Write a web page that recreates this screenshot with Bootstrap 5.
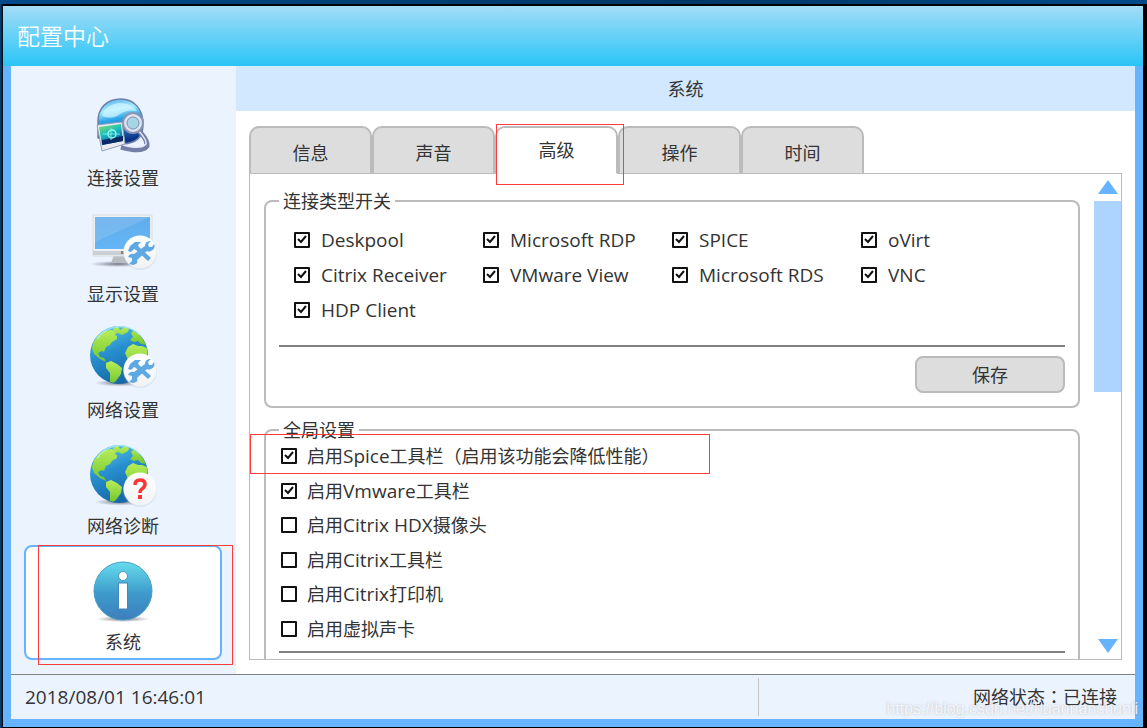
<!DOCTYPE html>
<html lang="zh-CN">
<head>
<meta charset="utf-8">
<meta name="viewport" content="width=device-width, initial-scale=1">
<title>配置中心</title>
<link href="https://cdn.jsdelivr.net/npm/bootstrap@5.3.0/dist/css/bootstrap.min.css" rel="stylesheet">
<style>
:root { --edge:#66b3ff; --pale:#ebf3ff; --line:#bbb; --mark:#ff3b3b; }
body { font-family:"Open Sans","Noto Sans CJK SC",sans-serif; font-size:18px; line-height:24px; color:#333; background:linear-gradient(90deg,#00498a,#003768 60%,#00498a) top/100% 4px no-repeat,linear-gradient(90deg,#063c6c 1px,#000 3px); }
.desktop { height:100vh; padding:6px 4px 1px 3px; }
.titlebar { height:60px; padding-left:14px; color:#fff; background:linear-gradient(#a3dcf7,#29c5f6); }
.titlebar h1 { font-size:23px; font-weight:350; line-height:32px; }
.frame { border:solid var(--edge); border-width:0 8px 8px; min-height:0; }
.side { width:225px; background:var(--pale); padding:15px 14px 0 13px; gap:1px; }
.side-item { height:115px; padding-top:10px; border:2px solid transparent; border-radius:8px; background:none; color:inherit; }
.side-item svg { width:70px; height:70px; display:block; margin-bottom:3px; }
.side-item.current { background:#fff; border-color:var(--edge); }
.page-title { height:45px; font-size:18px; line-height:46px; background:#d1e8ff; }
.work { padding:15px 13px 14px; }
.tab-btn { width:123px; height:48px; padding-top:5px; border:2px solid var(--line); border-width:2px 2px 1px; border-radius:10px 10px 0 0; background:#ddd; color:inherit; }
.tab-btn.current { background:#fff; border-bottom-color:#fff; padding-top:0; }
.tab-row { margin-bottom:-1px; z-index:1; }
.panel { border:1px solid var(--line); }
.pane { padding:15px 14px 0 14px; }
fieldset { border:2px solid var(--line); border-radius:8px; padding:0 13px; margin-bottom:10px; }
legend { float:none; width:auto; margin:0; padding:0 4px; font-size:18px; line-height:24px; }
.types { display:grid; grid-template-columns:repeat(4,189px); grid-auto-rows:35px; padding:9px 0 0 15px; font-size:19px; height:132px; }
.types label { gap:11px; }
.opts { display:grid; grid-template-rows:repeat(6,1fr); height:212px; padding:0 0 5px 2px; margin-top:-3px; }
.opts label { gap:10px; }
.opts b { font-size:19px; font-weight:400; }
.tail { padding-bottom:60px; }
.tick { appearance:none; flex:none; width:16px; height:16px; margin:0; border:2px solid #111; border-radius:1px; background:#fff; }
.tick:checked { background:#fff url("data:image/svg+xml,%3Csvg xmlns='http://www.w3.org/2000/svg' viewBox='0 0 12 12'%3E%3Cpath d='M2 5l3 3 5-6' fill='none' stroke='%23111' stroke-width='2'/%3E%3C/svg%3E") center/12px; }
.rule { height:2px; margin:0; border:0; background:#808080; opacity:1; }
.save { width:150px; height:37px; margin:9px 0 13px; border:2px solid var(--line); border-radius:8px; background:#ddd; color:inherit; }
.scroller { width:27px; padding:6px 0; }
.scroller button { border:0; padding:0; background:none; height:14px; line-height:0; }
.thumb { height:191px; margin-top:7px; background:#acd4ff; }
.status { height:45px; border-top:1px solid #808080; background:var(--pale); padding:3px 19px 3px 14px; }
.state { width:359px; border-left:1px solid #c4c4c4; font-family:"Open Sans","Noto Sans CJK TC",sans-serif; margin-right:-1px; }
.clock { font-size:19px; }
.callout-box { position:absolute; border:1px solid var(--mark); pointer-events:none; z-index:3; }
.around-side { inset:-2px -13px -7px 12px; }
.around-tab { inset:-4px -8px -12px -1px; }
.around-opt { left:-31px; top:-5px; width:460px; height:40px; }
.stamp { position:absolute; right:9px; bottom:7px; font:16px/24px "Liberation Sans",sans-serif; color:#ffffffd0; text-shadow:0 0 2px #8888; pointer-events:none; }
</style>
</head>
<body>
<svg width="0" height="0" class="position-absolute" aria-hidden="true">
  <defs>
    <linearGradient id="sea" x2="0.4" y2="1"><stop stop-color="#62cdf1"/><stop offset=".5" stop-color="#278fce"/><stop offset="1" stop-color="#1769a8"/></linearGradient>
    <linearGradient id="land" x2="0" y2="1"><stop stop-color="#b8ed5a"/><stop offset="1" stop-color="#73c72d"/></linearGradient>
    <linearGradient id="screen" x2="0" y2="1"><stop stop-color="#62adeb"/><stop offset="1" stop-color="#64b5f5"/></linearGradient>
    <linearGradient id="disc" x2="0" y2="1"><stop stop-color="#fff"/><stop offset="1" stop-color="#f0f2f4"/></linearGradient>
    <linearGradient id="info" x2="0" y2="1"><stop stop-color="#66dcec"/><stop offset=".55" stop-color="#3d9acb"/><stop offset="1" stop-color="#3e7ebd"/></linearGradient>
    <linearGradient id="helmet" x2=".2" y2="1"><stop stop-color="#4aa9e5"/><stop offset=".3" stop-color="#a9edff"/><stop offset=".5" stop-color="#2fa6ea"/><stop offset="1" stop-color="#0a3186"/></linearGradient>
    <linearGradient id="photo" x2=".5" y2="1"><stop stop-color="#8be05c"/><stop offset=".5" stop-color="#18bfc2"/><stop offset="1" stop-color="#07529b"/></linearGradient>
    <radialGradient id="shade"><stop stop-color="#556" stop-opacity=".8"/><stop offset="1" stop-color="#667" stop-opacity="0"/></radialGradient>
    <clipPath id="ball"><circle cx="31" cy="34" r="28.500"/></clipPath>
    <g id="globe">
      <ellipse cx="32" cy="62" rx="25" ry="3.500" fill="url(#shade)"/>
      <circle cx="31" cy="34" r="29" fill="url(#sea)"/>
      <g clip-path="url(#ball)" fill="url(#land)">
        <path d="M4 27l2-7 5-7 6-3 6-1 5 1-1 4 2 1 0 3-5 3-2 3-4 2-2 5-2-1-4 2 2 4 4 1 2 4-6-3-6-5z"/>
        <path d="M25 8l5-3 2 4 5-3 4 2-1 3-6 3-4-2-3 1zM43 12l3-3 4 3 6 6 2 6-5-1-3-3-4 1-4-2 3-3z"/>
        <path d="M18 42l5-2 6 3 5 4-1 6-5 7-3 2-3-1 0-9-4-5z"/>
        <path d="M37 32l3-6 5-3 5 2 4 0 5 2 2 5v12l-8 7-5-2-1-8-7-2z"/>
      </g>
      <path d="M9 18A28 28 0 0 1 52 14" fill="none" stroke="#b8efff" stroke-width="1.500" opacity=".7"/>
    </g>
    <g id="puck"><circle cx="52" cy="50" r="17" fill="#b4c5d9" opacity=".35"/><circle cx="52" cy="49" r="16.500" fill="url(#disc)"/></g>
    <g id="tools" fill="#5ea9e4">
      <path d="M40 48l2-5 5-4 6 0-3 3 1 2 12 11-3 3-12-11-2-1-3 3z"/>
      <path d="M63 38l-3 3 1 3 3 0 2-3q2 5-3 7-2 1-4 0L49 57q1 3-1 4l-3 1-4-1 3-3 0-3-4-1q2-4 6-3L57 43q0-5 6-5z"/>
    </g>
  </defs>
</svg>

<div class="desktop d-flex flex-column position-relative">
  <header class="titlebar d-flex align-items-center flex-shrink-0"><h1 class="m-0">配置中心</h1></header>
  <div class="frame d-flex flex-column flex-grow-1">
    <div class="d-flex flex-grow-1 overflow-hidden">
      <nav class="side d-flex flex-column flex-shrink-0" aria-label="设置">
        <button type="button" class="side-item flex-shrink-0 d-flex flex-column align-items-center">
          <svg viewBox="0 0 70 70" aria-hidden="true">
            <path d="M10 31C9 14 20 6 33 6s22 10 22 25c0 14-7 19-20 20l-25-6z" fill="url(#helmet)" stroke="#6c80a9" stroke-width="1.500"/>
            <path d="M14 23q4-12 17-13 12 0 18 8-10-2-17 3-7 6-18 2z" fill="#d4f7ff" opacity=".7"/>
            <path d="M47 34q13 12 12 19-5 7-26 1" fill="none" stroke="#747ea5" stroke-width="5"/>
            <path d="M47 34q12 12 11 17-5 6-23 1" fill="none" stroke="#e7e9f8" stroke-width="1.500"/>
            <circle cx="45" cy="30" r="10" fill="#dbe3ee" stroke="#8995b4" stroke-width="2"/><circle cx="45" cy="30" r="6" fill="#a6d5e3" stroke="#8090b0"/>
            <path d="M9 32l25-3 3 22-23 7z" fill="#e8ecf1" stroke="#929eb6"/>
            <path d="M11 34l22-3 2 17-21 4z" fill="url(#photo)"/>
            <path d="M14 47l21-4v5l-21 4z" fill="#092b65"/>
            <circle cx="24" cy="41" r="4" fill="none" stroke="#9ff7e8" stroke-width="1.500"/><path d="M15 41h17M23 35v12" stroke="#79eada"/>
          </svg>
          <span>连接设置</span>
        </button>
        <button type="button" class="side-item flex-shrink-0 d-flex flex-column align-items-center">
          <svg viewBox="0 2 70 70" aria-hidden="true">
            <ellipse cx="30" cy="57" rx="28" ry="3" fill="url(#shade)"/>
            <path d="M26 48h13l3 8H23z" fill="#b8bdc1"/>
            <path d="M5 8h59v41H5z" fill="#eef1f3" stroke="#d6dce1"/>
            <path d="M7 10h55v32H7z" fill="url(#screen)"/><path d="M7 10h55L7 35z" fill="#fff" opacity=".12"/>
            <path d="M5 44h59v4H5z" fill="#cbd0d4"/><path d="M33 44h3v3h-3z" fill="#7c8387"/>
            <use href="#puck" y="-4"/><use href="#tools" y="-4"/>
          </svg>
          <span>显示设置</span>
        </button>
        <button type="button" class="side-item flex-shrink-0 d-flex flex-column align-items-center">
          <svg viewBox="0 4 70 70" aria-hidden="true"><use href="#globe"/><use href="#puck"/><use href="#tools"/></svg>
          <span>网络设置</span>
        </button>
        <button type="button" class="side-item flex-shrink-0 d-flex flex-column align-items-center">
          <svg viewBox="0 1 70 70" aria-hidden="true"><use href="#globe"/><use href="#puck"/><path d="M47 45q0-5 5-5t5 4q0 3-3 5-2 1-2 4" fill="none" stroke="#f33" stroke-width="3.500"/><path d="M50 55h4v4h-4z" fill="#f33"/></svg>
          <span>网络诊断</span>
        </button>
        <button type="button" class="side-item current flex-shrink-0 position-relative d-flex flex-column align-items-center" aria-current="page">
          <svg viewBox="0 0 70 70" aria-hidden="true">
            <ellipse cx="35" cy="62" rx="27" ry="3" fill="url(#shade)"/>
            <circle cx="35" cy="34" r="29" fill="url(#info)" stroke="#459dc5"/>
            <circle cx="35" cy="19" r="4.500" fill="#fff" stroke="#4a9cbd"/><path d="M30.500 26h9v26h-9z" fill="#fff" stroke="#4587b7"/>
          </svg>
          <span>系统</span>
          <i class="callout-box around-side"></i>
        </button>
      </nav>
      <main class="d-flex flex-column flex-grow-1 bg-white overflow-hidden">
        <h2 class="page-title text-center fw-normal m-0 flex-shrink-0">系统</h2>
        <div class="work d-flex flex-column flex-grow-1 overflow-hidden">
          <div class="tab-row d-flex position-relative flex-shrink-0" role="tablist">
            <button type="button" role="tab" class="tab-btn">信息</button>
            <button type="button" role="tab" class="tab-btn">声音</button>
            <button type="button" role="tab" class="tab-btn current position-relative" aria-selected="true">高级<i class="callout-box around-tab"></i></button>
            <button type="button" role="tab" class="tab-btn">操作</button>
            <button type="button" role="tab" class="tab-btn">时间</button>
          </div>
          <div class="panel d-flex flex-grow-1 overflow-hidden">
            <div class="pane flex-grow-1">
              <fieldset>
                <legend>连接类型开关</legend>
                <div class="types">
                  <label class="d-flex align-items-center"><input class="tick" type="checkbox" checked>Deskpool</label>
                  <label class="d-flex align-items-center"><input class="tick" type="checkbox" checked>Microsoft RDP</label>
                  <label class="d-flex align-items-center"><input class="tick" type="checkbox" checked>SPICE</label>
                  <label class="d-flex align-items-center"><input class="tick" type="checkbox" checked>oVirt</label>
                  <label class="d-flex align-items-center"><input class="tick" type="checkbox" checked>Citrix Receiver</label>
                  <label class="d-flex align-items-center"><input class="tick" type="checkbox" checked>VMware View</label>
                  <label class="d-flex align-items-center"><input class="tick" type="checkbox" checked>Microsoft RDS</label>
                  <label class="d-flex align-items-center"><input class="tick" type="checkbox" checked>VNC</label>
                  <label class="d-flex align-items-center"><input class="tick" type="checkbox" checked>HDP Client</label>
                </div>
                <hr class="rule">
                <div class="d-flex justify-content-end"><button type="button" class="save">保存</button></div>
              </fieldset>
              <fieldset class="tail">
                <legend>全局设置</legend>
                <div class="opts">
                  <label class="d-flex align-items-center position-relative"><input class="tick" type="checkbox" checked><span>启用<b>Spice</b>工具栏（启用该功能会降低性能）</span><i class="callout-box around-opt"></i></label>
                  <label class="d-flex align-items-center"><input class="tick" type="checkbox" checked><span>启用<b>Vmware</b>工具栏</span></label>
                  <label class="d-flex align-items-center"><input class="tick" type="checkbox"><span>启用<b>Citrix HDX</b>摄像头</span></label>
                  <label class="d-flex align-items-center"><input class="tick" type="checkbox"><span>启用<b>Citrix</b>工具栏</span></label>
                  <label class="d-flex align-items-center"><input class="tick" type="checkbox"><span>启用<b>Citrix</b>打印机</span></label>
                  <label class="d-flex align-items-center"><input class="tick" type="checkbox"><span>启用虚拟声卡</span></label>
                </div>
                <hr class="rule">
              </fieldset>
            </div>
            <div class="scroller d-flex flex-column flex-shrink-0">
              <button type="button" aria-label="向上滚动"><svg width="20" height="14" viewBox="0 0 20 14"><path d="M10 0l10 14H0z" fill="#66b3ff"/></svg></button>
              <div class="thumb"></div>
              <button type="button" class="mt-auto" aria-label="向下滚动"><svg width="20" height="14" viewBox="0 0 20 14"><path d="M0 0h20L10 14z" fill="#66b3ff"/></svg></button>
            </div>
          </div>
        </div>
      </main>
    </div>
    <footer class="status d-flex flex-shrink-0 justify-content-between align-items-stretch">
      <time class="clock align-self-center">2018/08/01 16:46:01</time>
      <div class="state d-flex align-items-center justify-content-end" lang="zh-TW">网络状态：已连接</div>
    </footer>
  </div>
  <div class="stamp">https://blog.csdn.net/huannanchunli</div>
</div>
<script src="https://cdn.jsdelivr.net/npm/bootstrap@5.3.0/dist/js/bootstrap.bundle.min.js"></script>
</body>
</html>
